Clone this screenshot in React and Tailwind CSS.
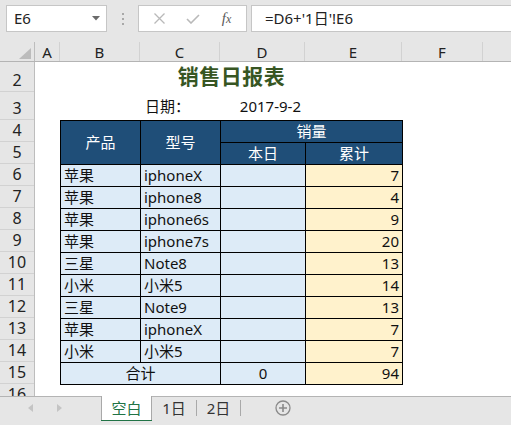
import React from 'react';

const rows = [
  ['苹果', 'iphoneX', 7],
  ['苹果', 'iphone8', 4],
  ['苹果', 'iphone6s', 9],
  ['苹果', 'iphone7s', 20],
  ['三星', 'Note8', 13],
  ['小米', '小米5', 14],
  ['三星', 'Note9', 13],
  ['苹果', 'iphoneX', 7],
  ['小米', '小米5', 7],
];

const cols = [
  { name: 'A', w: 'w-[25px]' },
  { name: 'B', w: 'w-[80px]' },
  { name: 'C', w: 'w-[80px]' },
  { name: 'D', w: 'w-[85px]' },
  { name: 'E', w: 'w-[97px]' },
  { name: 'F', w: 'w-[81px]' },
];

function Toolbar() {
  return (
    <div className="h-[42px] bg-[#e6e6e6] flex items-start pt-[5px] pl-[6px]">
      {/* name box */}
      <div className="w-[101px] h-[27px] bg-white border border-[#c6c6c6] flex items-center justify-between pl-[7px] pr-[6px]">
        <span className="text-[15px] text-[#222]">E6</span>
        <svg width="8" height="5" viewBox="0 0 8 5"><path d="M0 0 L8 0 L4 4.5 Z" fill="#6b6b6b" /></svg>
      </div>
      <div className="w-[31px] h-[27px] flex flex-col items-center justify-center gap-[3px]">
        <span className="w-[2px] h-[2px] bg-[#a8a8a8]" />
        <span className="w-[2px] h-[2px] bg-[#a8a8a8]" />
        <span className="w-[2px] h-[2px] bg-[#a8a8a8]" />
      </div>
      {/* cancel / enter / fx */}
      <div className="w-[109px] h-[27px] bg-white border border-[#c6c6c6] flex items-center">
        <div className="w-[38px] flex justify-center pl-[2px]">
          <svg width="11" height="11" viewBox="0 0 11 11">
            <path d="M0.5 0.5 L10.5 10.5 M10.5 0.5 L0.5 10.5" stroke="#b9b9b9" strokeWidth="1.3" />
          </svg>
        </div>
        <div className="w-[32px] flex justify-center">
          <svg width="14" height="10" viewBox="0 0 14 10">
            <path d="M1 5 L5 9 L13 1" stroke="#b9b9b9" strokeWidth="1.6" fill="none" />
          </svg>
        </div>
        <div className="flex-1 flex justify-center pr-[2px]">
          <span className="font-['Liberation_Serif',serif] italic text-[15px] text-[#5a5a5a] leading-none">
            f<span className="text-[12px]">x</span>
          </span>
        </div>
      </div>
      <div className="ml-[4px] flex-1 h-[27px] bg-white border-y border-l border-[#c6c6c6] flex items-center pl-[13px]">
        <span className="text-[15px] text-[#222]">=D6+'1日'!E6</span>
      </div>
    </div>
  );
}

function ColumnHeader() {
  return (
    <div className="h-[20px] bg-[#e6e6e6] border-b border-[#b4b4b4] flex">
      <div className="w-[35px] border-r border-[#bdbdbd] flex justify-end items-end pr-[3px] pb-[2px]">
        <svg width="12" height="11" viewBox="0 0 12 11"><path d="M12 0 L12 11 L0 11 Z" fill="#bcbcbc" /></svg>
      </div>
      {cols.map(c => (
        <div key={c.name} className={`${c.w} border-r border-[#d2d2d2] flex items-center justify-center text-[15px] text-[#222] pt-[1px]`}>
          {c.name}
        </div>
      ))}
      <div className="flex-1 flex items-center justify-center text-[15px] text-[#222]" />
    </div>
  );
}

function RowHeaders() {
  const items = [
    { n: 2, h: 'h-[30px]' },
    { n: 3, h: 'h-[28px]' },
    ...Array.from({ length: 13 }, (_, i) => ({ n: i + 4, h: 'h-[22px]' })),
  ];
  return (
    <div className="w-[35px] shrink-0 bg-[#e6e6e6] border-r border-[#bdbdbd] flex flex-col">
      {items.map(it => (
        <div key={it.n} className={`${it.h} shrink-0 border-b border-[#d2d2d2] flex items-end justify-center text-[16px] leading-[21px] text-[#222]`}>
          {it.n}
        </div>
      ))}
    </div>
  );
}

function Sheet() {
  const head = 'bg-[#1f4e78] text-white border-r border-b border-black flex items-center justify-center';
  const blue = 'bg-[#ddebf7] border-r border-b border-black flex items-center';
  const yellow = 'bg-[#fff2cc] border-r border-b border-black flex items-center justify-end pr-[3px]';
  return (
    <div className="flex-1 bg-white flex flex-col text-[15px] text-[#111]">
      {/* row 2 */}
      <div className="h-[30px] shrink-0 flex">
        <div className="w-[25px]" />
        <div className="w-[343px] flex items-center justify-center">
          <span className="text-[21px] font-bold text-[#375623] tracking-[0.5px]">销售日报表</span>
        </div>
      </div>
      {/* row 3 */}
      <div className="h-[28px] shrink-0 flex items-end pb-[4px]">
        <div className="w-[105px]" />
        <div className="w-[80px] pl-[5px] leading-[20px]">日期：</div>
        <div className="w-[85px] text-right pr-[4px] leading-[20px]">2017-9-2</div>
      </div>
      {/* table */}
      <div className="ml-[25px] w-[343px] grid grid-cols-[80px_80px_85px_97px] auto-rows-[22px] border-l border-t border-black">
        <div className={`${head} row-span-2`}>产品</div>
        <div className={`${head} row-span-2`}>型号</div>
        <div className={`${head} col-span-2`}>销量</div>
        <div className={head}>本日</div>
        <div className={head}>累计</div>
        {rows.map((r, i) => (
          <React.Fragment key={i}>
            <div className={`${blue} pl-[3px]`}>{r[0]}</div>
            <div className={`${blue} pl-[3px]`}>{r[1]}</div>
            <div className={blue} />
            <div className={yellow}>{r[2]}</div>
          </React.Fragment>
        ))}
        <div className={`${blue} col-span-2 justify-center`}>合计</div>
        <div className={`${blue} justify-center`}>0</div>
        <div className={yellow}>94</div>
      </div>
    </div>
  );
}

function TabBar() {
  return (
    <div className="h-[29px] shrink-0 bg-[#e6e6e6] border-t border-[#b4b4b4] flex items-start text-[15px]">
      <div className="w-[101px] h-[22px] flex items-center">
        <div className="w-[28px]" />
        <svg width="5" height="8" viewBox="0 0 5 8"><path d="M5 0 L5 8 L0 4 Z" fill="#c4c4c4" /></svg>
        <div className="w-[24px]" />
        <svg width="5" height="8" viewBox="0 0 5 8"><path d="M0 0 L0 8 L5 4 Z" fill="#c4c4c4" /></svg>
      </div>
      <div className="w-[51px] h-[24px] -mt-[1px] bg-white border-x border-[#a9a9a9] flex flex-col">
        <div className="flex-1 flex items-center justify-center text-[#217346] pt-[1px]">空白</div>
        <div className="h-[3px] bg-[#217346] -mx-[1px]" />
      </div>
      <div className="w-[45px] h-[22px] flex items-center justify-center text-[#333] border-r border-[#a9a9a9] my-[3px] !h-[16px]">
        1日
      </div>
      <div className="w-[44px] h-[16px] my-[3px] flex items-center justify-center text-[#333] border-r border-[#a9a9a9]">
        2日
      </div>
      <div className="w-[34px]" />
      <div className="h-[22px] flex items-center">
        <svg width="16" height="16" viewBox="0 0 16 16">
          <circle cx="8" cy="8" r="7" stroke="#8a8a8a" strokeWidth="1.3" fill="none" />
          <path d="M8 4 L8 12 M4 8 L12 8" stroke="#8a8a8a" strokeWidth="1.6" />
        </svg>
      </div>
    </div>
  );
}

export default function App() {
  return (
    <div className="w-[511px] h-[425px] overflow-hidden flex flex-col bg-white font-['Noto_Sans','Noto_Sans_CJK_SC',sans-serif]">
      <Toolbar />
      <ColumnHeader />
      <div className="flex-1 flex overflow-hidden">
        <RowHeaders />
        <Sheet />
      </div>
      <TabBar />
    </div>
  );
}
